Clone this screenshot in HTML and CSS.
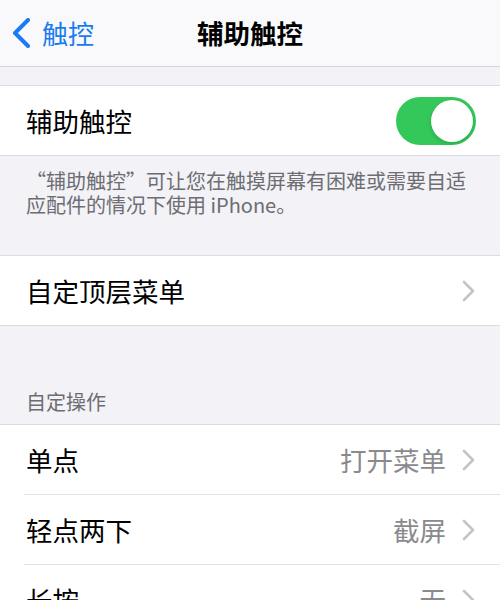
FILE: index.html
```html
<!DOCTYPE html>
<html lang="zh-CN">
<head>
<meta charset="utf-8">
<link rel="stylesheet" href="styles.css">
</head>
<body>
<header class="nav">
  <div class="back">
    <svg class="back-icon" width="22" height="30" viewBox="0 0 22 30"><path d="M18 2 L5 15 L18 28" fill="none" stroke="#1a7cf0" stroke-width="4" stroke-linecap="round" stroke-linejoin="round"/></svg>
    <span class="back-text">触控</span>
  </div>
  <div class="title">辅助触控</div>
</header>

<section class="group first">
  <div class="row">
    <span class="label">辅助触控</span>
    <span class="toggle"><span class="knob"></span></span>
  </div>
</section>
<p class="footer">“辅助触控”可让您在触摸屏幕有困难或需要自适应配件的情况下使用 iPhone。</p>

<section class="group">
  <div class="row">
    <span class="label">自定顶层菜单</span>
    <span class="accessory"><svg class="chev" width="14" height="22" viewBox="0 0 14 22"><path d="M3 2 L12 11 L3 20" fill="none" stroke="#c4c4c7" stroke-width="2.6" stroke-linecap="round" stroke-linejoin="round"/></svg></span>
  </div>
</section>

<div class="header">自定操作</div>
<section class="group">
  <div class="row">
    <span class="label">单点</span>
    <span class="accessory"><span class="value">打开菜单</span><svg class="chev" width="14" height="22" viewBox="0 0 14 22"><path d="M3 2 L12 11 L3 20" fill="none" stroke="#c4c4c7" stroke-width="2.6" stroke-linecap="round" stroke-linejoin="round"/></svg></span>
  </div>
  <div class="row sep">
    <span class="label">轻点两下</span>
    <span class="accessory"><span class="value">截屏</span><svg class="chev" width="14" height="22" viewBox="0 0 14 22"><path d="M3 2 L12 11 L3 20" fill="none" stroke="#c4c4c7" stroke-width="2.6" stroke-linecap="round" stroke-linejoin="round"/></svg></span>
  </div>
  <div class="row sep">
    <span class="label">长按</span>
    <span class="accessory"><span class="value">无</span><svg class="chev" width="14" height="22" viewBox="0 0 14 22"><path d="M3 2 L12 11 L3 20" fill="none" stroke="#c4c4c7" stroke-width="2.6" stroke-linecap="round" stroke-linejoin="round"/></svg></span>
  </div>
</section>
</body>
</html>
```

FILE: styles.css
```css
html, body {
  margin: 0;
  padding: 0;
}
body {
  background: #f2f2f7;
  font-family: "Noto Sans CJK SC", "Noto Sans", sans-serif;
  width: 500px;
  height: 600px;
  overflow: hidden;
}
.nav {
  height: 66px;
  background: #f9f9fb;
  border-bottom: 1px solid #d6d6da;
  display: grid;
  grid-template-columns: 1fr auto 1fr;
  align-items: center;
}
.back {
  grid-column: 1;
  grid-row: 1;
  display: flex;
  align-items: center;
  padding-left: 10px;
}
.back-icon {
  display: block;
}
.back-text {
  color: #1a7cf0;
  font-size: 26px;
  margin-left: 10px;
  line-height: 30px;
}
.title {
  grid-column: 2;
  grid-row: 1;
  font-size: 26.5px;
  font-weight: 600;
  color: #000;
  line-height: 30px;
}
.group {
  background: #fff;
  border-top: 1px solid #dcdce0;
  border-bottom: 1px solid #dcdce0;
}
.group.first {
  margin-top: 18px;
}
.row {
  height: 69px;
  display: flex;
  align-items: center;
  justify-content: space-between;
  padding: 0 25px 0 26px;
}
.row.sep {
  border-top: 1px solid #e2e2e6;
  margin-left: 24px;
  padding-left: 2px;
}
.label {
  font-size: 26.5px;
  color: #000;
  line-height: 30px;
}
.accessory {
  display: flex;
  align-items: center;
}
.value {
  font-size: 26.5px;
  color: #8a8a8e;
  line-height: 30px;
  margin-right: 15px;
}
.chev {
  display: block;
}
.toggle {
  width: 80px;
  height: 48px;
  border-radius: 24px;
  background: #34c759;
  display: flex;
  align-items: center;
  justify-content: flex-end;
  padding: 0 3px;
  box-sizing: border-box;
  margin-right: -1px;
}
.knob {
  width: 42px;
  height: 42px;
  border-radius: 50%;
  background: #fff;
  box-shadow: 0 2px 4px rgba(0,0,0,0.15);
}
.footer {
  margin: 0;
  padding: 13px 26px 0 26px;
  height: 86px;
  font-size: 20px;
  line-height: 24px;
  color: #6d6d72;
}
.header {
  padding: 0 26px 10px 26px;
  margin-top: 64px;
  font-size: 20px;
  line-height: 24px;
  color: #6d6d72;
}
```
